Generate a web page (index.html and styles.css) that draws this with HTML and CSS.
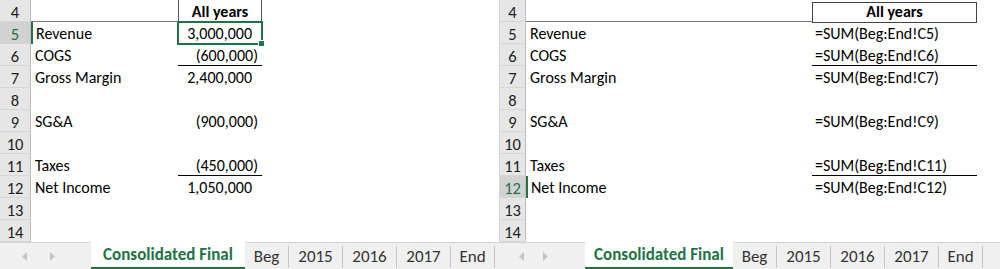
FILE: index.html
```html
<!DOCTYPE html>
<html lang="en">
<head>
    <meta charset="UTF-8">
    <title>All years - values and formulas</title>
    <link rel="stylesheet" href="styles.css">
</head>
<body>
    <div class="sheets">
        <!-- values view -->
        <section class="sheet values">
            <div class="grid">
                <div class="row">
                    <div class="rh">4</div>
                    <div class="cell b freeze"></div>
                    <div class="cell c head">All years</div>
                </div>
                <div class="row">
                    <div class="rh sel">5</div>
                    <div class="cell b sel-edge">Revenue</div>
                    <div class="cell c num pos active">3,000,000</div>
                </div>
                <div class="row">
                    <div class="rh">6</div>
                    <div class="cell b">COGS</div>
                    <div class="cell c num ul">(600,000)</div>
                </div>
                <div class="row">
                    <div class="rh">7</div>
                    <div class="cell b">Gross Margin</div>
                    <div class="cell c num pos">2,400,000</div>
                </div>
                <div class="row">
                    <div class="rh">8</div>
                    <div class="cell b"></div>
                    <div class="cell c"></div>
                </div>
                <div class="row">
                    <div class="rh">9</div>
                    <div class="cell b">SG&amp;A</div>
                    <div class="cell c num">(900,000)</div>
                </div>
                <div class="row">
                    <div class="rh">10</div>
                    <div class="cell b"></div>
                    <div class="cell c"></div>
                </div>
                <div class="row">
                    <div class="rh">11</div>
                    <div class="cell b">Taxes</div>
                    <div class="cell c num ul">(450,000)</div>
                </div>
                <div class="row">
                    <div class="rh">12</div>
                    <div class="cell b">Net Income</div>
                    <div class="cell c num pos">1,050,000</div>
                </div>
                <div class="row">
                    <div class="rh">13</div>
                    <div class="cell b"></div>
                    <div class="cell c"></div>
                </div>
                <div class="row">
                    <div class="rh">14</div>
                    <div class="cell b"></div>
                    <div class="cell c"></div>
                </div>
            </div>
            <div class="tabbar">
                <div class="nav">
                    <svg width="6" height="9" viewBox="0 0 6 9"><path d="M5 0 L0 4.5 L5 9 Z" fill="#c4c4c4"/></svg>
                    <svg width="6" height="9" viewBox="0 0 6 9"><path d="M1 0 L6 4.5 L1 9 Z" fill="#c4c4c4"/></svg>
                </div>
                <div class="tab current">Consolidated Final</div>
                <div class="tab t-beg">Beg</div>
                <div class="tab t-year">2015</div>
                <div class="tab t-year">2016</div>
                <div class="tab t-year">2017</div>
                <div class="tab t-end">End</div>
            </div>
        </section>

        <!-- formulas view -->
        <section class="sheet formulas">
            <div class="grid">
                <div class="row">
                    <div class="rh">4</div>
                    <div class="cell b freeze"></div>
                    <div class="cell c"><div class="box">All years</div></div>
                </div>
                <div class="row">
                    <div class="rh">5</div>
                    <div class="cell b">Revenue</div>
                    <div class="cell c f">=SUM(Beg:End!C5)</div>
                </div>
                <div class="row">
                    <div class="rh">6</div>
                    <div class="cell b">COGS</div>
                    <div class="cell c f ul">=SUM(Beg:End!C6)</div>
                </div>
                <div class="row">
                    <div class="rh">7</div>
                    <div class="cell b">Gross Margin</div>
                    <div class="cell c f">=SUM(Beg:End!C7)</div>
                </div>
                <div class="row">
                    <div class="rh">8</div>
                    <div class="cell b"></div>
                    <div class="cell c"></div>
                </div>
                <div class="row">
                    <div class="rh">9</div>
                    <div class="cell b">SG&amp;A</div>
                    <div class="cell c f">=SUM(Beg:End!C9)</div>
                </div>
                <div class="row">
                    <div class="rh">10</div>
                    <div class="cell b"></div>
                    <div class="cell c"></div>
                </div>
                <div class="row">
                    <div class="rh">11</div>
                    <div class="cell b">Taxes</div>
                    <div class="cell c f ul">=SUM(Beg:End!C11)</div>
                </div>
                <div class="row">
                    <div class="rh sel">12</div>
                    <div class="cell b sel-edge">Net Income</div>
                    <div class="cell c f">=SUM(Beg:End!C12)</div>
                </div>
                <div class="row">
                    <div class="rh">13</div>
                    <div class="cell b"></div>
                    <div class="cell c"></div>
                </div>
                <div class="row">
                    <div class="rh">14</div>
                    <div class="cell b"></div>
                    <div class="cell c"></div>
                </div>
            </div>
            <div class="tabbar">
                <div class="nav">
                    <svg width="6" height="9" viewBox="0 0 6 9"><path d="M5 0 L0 4.5 L5 9 Z" fill="#c4c4c4"/></svg>
                    <svg width="6" height="9" viewBox="0 0 6 9"><path d="M1 0 L6 4.5 L1 9 Z" fill="#c4c4c4"/></svg>
                </div>
                <div class="tab current">Consolidated Final</div>
                <div class="tab t-beg">Beg</div>
                <div class="tab t-year">2015</div>
                <div class="tab t-year">2016</div>
                <div class="tab t-year">2017</div>
                <div class="tab t-end">End</div>
            </div>
        </section>
    </div>
</body>
</html>
```

FILE: styles.css
```css
:root {
    --xl-green: #217346;
    --hdr-bg: #e6e6e6;
    --hdr-sel: #d2d2d2;
    --tab-bg: #f0f0f0;
}

* {
    margin: 0;
    padding: 0;
    box-sizing: border-box;
}

body {
    background: white;
    font-family: Carlito, Calibri, 'Liberation Sans', sans-serif;
    font-size: 16px;
    color: black;
}

.sheets {
    display: flex;
    width: 1000px;
    height: 269px;
    overflow: hidden;
}

.sheet {
    display: flex;
    flex-direction: column;
}

.values {
    width: 499px;
}

.formulas {
    flex: 1;
}

.grid {
    height: 242px;
}

.row {
    display: flex;
    height: 22px;
}

.rh {
    width: 31px;
    background: var(--hdr-bg);
    border-right: 1px solid #bdbdbd;
    border-bottom: 1px solid #d6d6d6;
    text-align: center;
    padding-top: 2px;
    line-height: 20px;
    color: #1e1e1e;
    font-size: 16.5px;
}

.formulas .rh {
    width: 27px;
    border-left: 1px solid #d6d6d6;
}

.rh.sel {
    background: var(--hdr-sel);
    color: var(--xl-green);
}

.cell {
    height: 22px;
    padding-top: 2px;
    line-height: 20px;
    white-space: nowrap;
}

.cell.b {
    width: 147px;
    padding-left: 4px;
}

.formulas .cell.b {
    width: 286px;
}

.cell.sel-edge {
    border-left: 2px solid var(--xl-green);
    padding-left: 3px;
}

.cell.freeze {
    border-bottom: 1px solid #777;
}

.cell.c {
    width: 84px;
    position: relative;
}

.formulas .cell.c {
    width: 165px;
}

.cell.head {
    border-left: 1px solid #555;
    border-right: 1px solid #555;
    text-align: center;
    font-weight: bold;
}

.num {
    text-align: right;
    padding-right: 4px;
}

.num.pos {
    padding-right: 10px;
}

.ul {
    border-bottom: 1px solid black;
}

.active {
    outline: 2px solid var(--xl-green);
    outline-offset: -1px;
}

.active::after {
    content: '';
    position: absolute;
    right: -3px;
    bottom: -3px;
    width: 5px;
    height: 5px;
    background: var(--xl-green);
    border: 1px solid white;
}

.box {
    margin-top: 0;
    height: 21px;
    line-height: 18px;
    border: 1px solid #444;
    text-align: center;
    font-weight: bold;
}

.f {
    padding-left: 3px;
}

.tabbar {
    flex: 1;
    display: flex;
    background: var(--tab-bg);
    border-top: 1px solid #d4d4d4;
    color: #333;
    font-size: 17px;
}

.nav {
    width: 91px;
    display: flex;
    align-items: center;
    gap: 21px;
    padding-left: 22px;
    padding-bottom: 2px;
}

.formulas .nav {
    width: 86px;
    gap: 17px;
    padding-left: 20px;
}

.tab {
    display: flex;
    align-items: center;
    justify-content: center;
    border-right: 1px solid #c6c6c6;
    margin: 3px 0 4px;
    padding-bottom: 1px;
}

.tab.current {
    width: 154px;
    margin: -1px 0 2px;
    background: white;
    border-right: none;
    border-bottom: 3px solid var(--xl-green);
    color: var(--xl-green);
    font-weight: bold;
}

.formulas .tab.current {
    width: 148px;
}

.t-beg {
    width: 44px;
}

.t-year {
    width: 54px;
}

.t-end {
    width: 44px;
}
```
